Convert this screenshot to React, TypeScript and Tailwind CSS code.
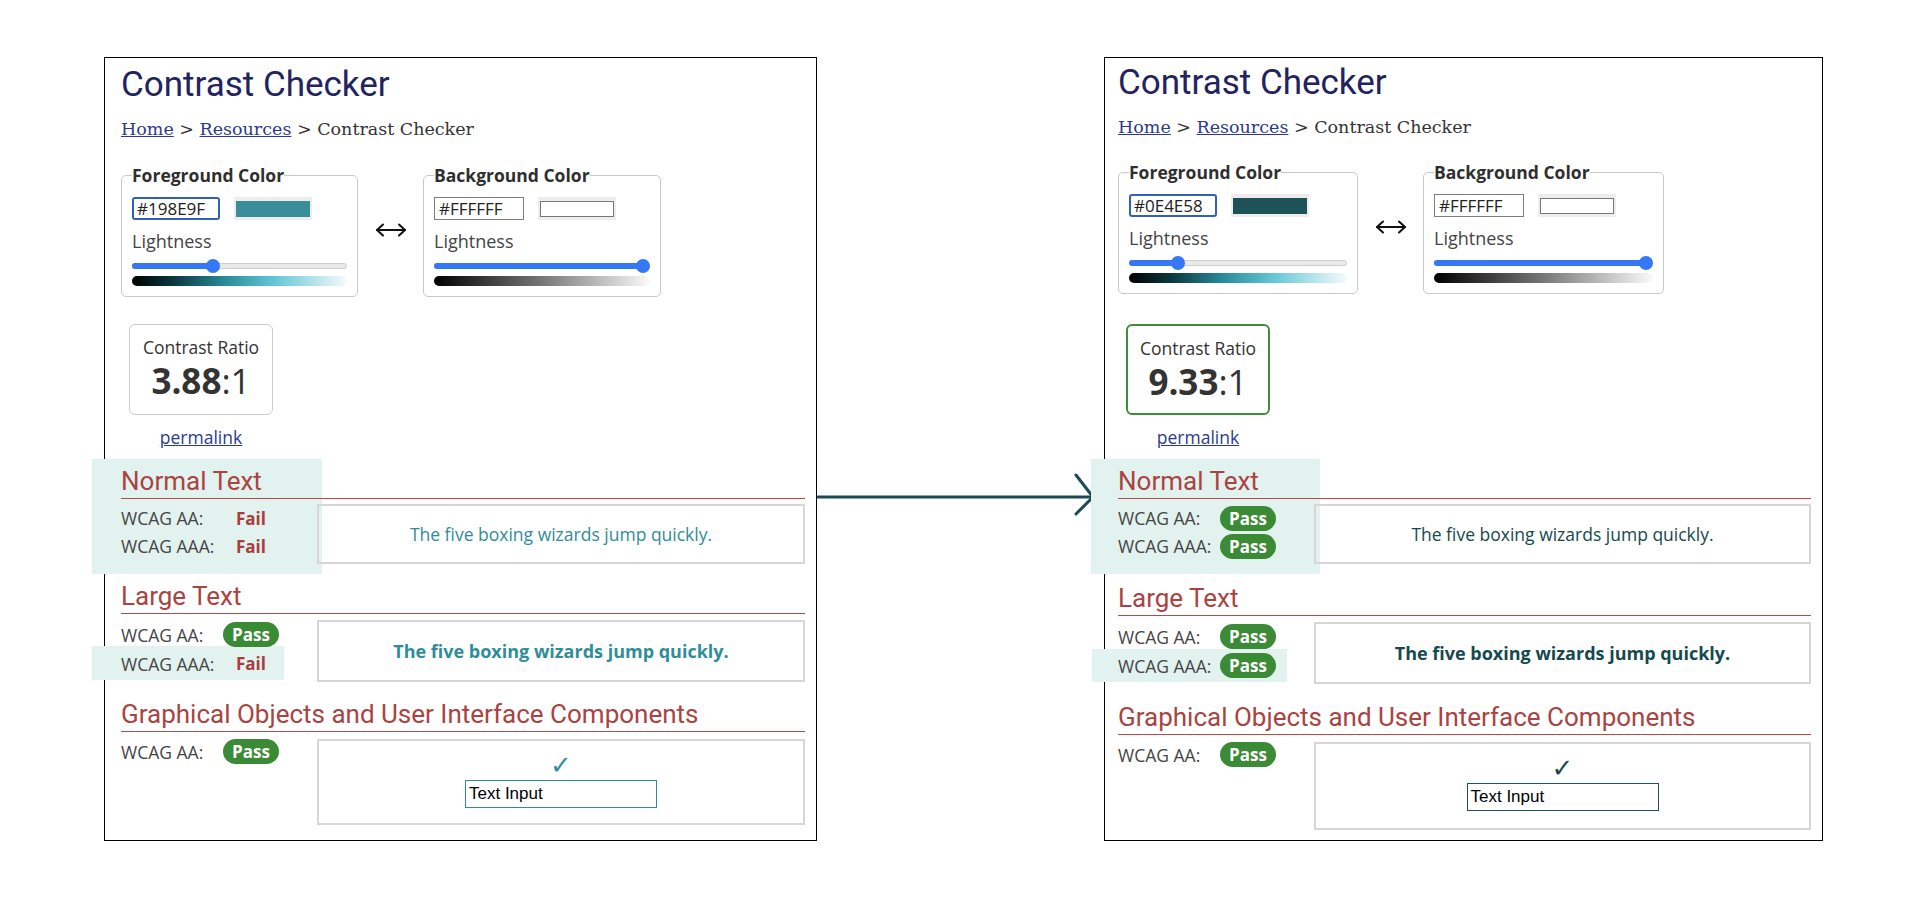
import React from 'react';

type Status = 'pass' | 'fail';

function Badge({ status }: { status: Status }) {
  if (status === 'pass') {
    return (
      <span className="flex h-[25px] w-[56px] items-center justify-center rounded-full bg-[#3b8a35] text-[17px] font-bold leading-none text-white">
        Pass
      </span>
    );
  }
  return (
    <span className="flex h-[25px] w-[56px] items-center justify-center text-[17px] font-bold leading-none text-[#a93c3c]">
      Fail
    </span>
  );
}

function Row({ label, status, h }: { label: string; status: Status; h: string }) {
  return (
    <div className={`flex items-center ${h}`}>
      <span className="w-[102px] shrink-0 text-[17.5px] leading-[24px] text-[#454545]">{label}</span>
      <Badge status={status} />
    </div>
  );
}

function Slider({ f }: { f: number }) {
  return (
    <div className="relative mt-[6px] flex h-[14px] items-center">
      <div className="h-[6px] w-full rounded-full border border-[#cfcfcf] bg-[#e9e9e9]" />
      <div
        className="absolute left-0 h-[6px] rounded-full bg-[#3478f6]"
        style={{ width: `calc((100% - 14px) * ${f} + 7px)` }}
      />
      <div
        className="absolute top-0 h-[14px] w-[14px] rounded-full bg-[#3478f6]"
        style={{ left: `calc((100% - 14px) * ${f})` }}
      />
    </div>
  );
}

function ColorField({
  title,
  hex,
  focused,
  swatch,
  f,
  gradient,
  width,
}: {
  title: string;
  hex: string;
  focused: boolean;
  swatch: string;
  f: number;
  gradient: string;
  width: string;
}) {
  return (
    <fieldset className={`${width} rounded-[5px] border border-[#c9c9c9] px-[10px] pt-[10px] pb-[10px]`}>
      <legend className="px-0 text-[17.5px] font-bold leading-[24px] text-[#2f2f2f]">{title}</legend>
      <div className="flex items-center gap-[14px]">
        {focused ? (
          <div className="h-[23px] w-[88px] rounded-[3px] border-2 border-[#2f62b6] px-[3px] text-[17px] leading-[19px] text-[#222]">
            {hex}
          </div>
        ) : (
          <div className="h-[23px] w-[90px] border border-[#7d7d7d] px-[4px] text-[17px] leading-[21px] text-[#222]">
            {hex}
          </div>
        )}
        <div className="flex h-[23px] w-[78px] items-center justify-center bg-[#ededed]">
          <div className={`h-[16px] w-[74px] ${swatch}`} />
        </div>
      </div>
      <div className="mt-[9px] text-[18px] leading-[24px] text-[#444]">Lightness</div>
      <Slider f={f} />
      <div className={`mt-[3px] h-[10px] rounded-full ${gradient}`} />
    </fieldset>
  );
}

function Section({
  title,
  className,
  hl,
  children,
}: {
  title: string;
  className: string;
  hl?: string;
  children: React.ReactNode;
}) {
  return (
    <section className={`relative ${className}`}>
      {hl && <div className={`absolute bg-[#e2f2ee] ${hl}`} />}
      <div className="relative">
        <h2 className="border-b border-[#b94a48] pb-[3px] font-['Roboto',sans-serif] text-[26px] leading-[28px] text-[#a94442]">
          {title}
        </h2>
        {children}
      </div>
    </section>
  );
}

type PanelProps = {
  panelClass: string;
  titleTop: string;
  pickersTop: string;
  ratioTop: string;
  largeTop: string;
  uiTop: string;
  uiBox: string;
  hex: string;
  fgText: string;
  fgSwatch: string;
  fgBorder: string;
  fgF: number;
  fgWidth: string;
  bgWidth: string;
  ratio: string;
  ratioBorder: string;
  normal: [Status, Status];
  large: [Status, Status];
  ui: Status;
  normalHl: string;
  largeHl: string;
};

function Panel(p: PanelProps) {
  return (
    <div
      className={`h-[784px] shrink-0 border border-black bg-white pr-[11px] font-['Open_Sans',sans-serif] text-[#444] ${p.panelClass}`}
    >
      <h1 className={`font-['Roboto',sans-serif] text-[35px] leading-[42px] text-[#22235f] ${p.titleTop}`}>
        Contrast Checker
      </h1>
      <div className="mt-[11px] font-['DejaVu_Serif',serif] text-[17.5px] leading-[24px] text-[#333]">
        <a className="text-[#2d3a8c] underline">Home</a> &gt; <a className="text-[#2d3a8c] underline">Resources</a>{' '}
        &gt; Contrast Checker
      </div>

      {/* color pickers */}
      <div className={`flex items-center ${p.pickersTop}`}>
        <ColorField
          title="Foreground Color"
          hex={p.hex}
          focused
          swatch={p.fgSwatch}
          f={p.fgF}
          width={p.fgWidth}
          gradient="bg-[linear-gradient(to_right,#000_0%,#0b3a42_20%,#2a8e9c_44%,#62c6d6_66%,#f5fbfc_100%)]"
        />
        <div className="flex w-[65px] shrink-0 justify-center">
          <svg width="32" height="14" viewBox="0 0 32 14" fill="none" stroke="#111" strokeWidth="2" strokeLinecap="round" strokeLinejoin="round">
            <path d="M2 7H30" />
            <path d="M8 1.5L2 7L8 12.5" />
            <path d="M24 1.5L30 7L24 12.5" />
          </svg>
        </div>
        <ColorField
          title="Background Color"
          hex="#FFFFFF"
          focused={false}
          swatch="bg-white border border-[#777]"
          f={1}
          width={p.bgWidth}
          gradient="bg-[linear-gradient(to_right,#000_0%,#777_50%,#fafafa_100%)]"
        />
      </div>

      {/* ratio */}
      <div className={`ml-[8px] flex w-[144px] flex-col items-center ${p.ratioTop}`}>
        <div className={`flex h-[91px] w-[144px] flex-col items-center rounded-[6px] pt-[10px] ${p.ratioBorder}`}>
          <div className="text-[17.5px] leading-[24px] text-[#333]">Contrast Ratio</div>
          <div className="mt-[2px] text-[35px] leading-[40px] text-[#333]">
            <span className="font-bold">{p.ratio}</span>:1
          </div>
        </div>
        <a className="mt-[10px] text-[17.5px] leading-[24px] text-[#2a3b8f] underline">permalink</a>
      </div>

      <Section title="Normal Text" className="mt-[18px]" hl={p.normalHl}>
        <div className="mt-[5px] flex">
          <div className="w-[196px] shrink-0">
            <Row label="WCAG AA:" status={p.normal[0]} h="h-[28px]" />
            <Row label="WCAG AAA:" status={p.normal[1]} h="h-[28px]" />
          </div>
          <div className={`flex h-[60px] flex-1 items-center justify-center border-2 border-[#d6d6d6] text-[17.5px] ${p.fgText}`}>
            The five boxing wizards jump quickly.
          </div>
        </div>
      </Section>

      <Section title="Large Text" className={p.largeTop} hl={p.largeHl}>
        <div className="mt-[6px] flex">
          <div className="w-[196px] shrink-0">
            <Row label="WCAG AA:" status={p.large[0]} h="h-[29px]" />
            <Row label="WCAG AAA:" status={p.large[1]} h="h-[29px]" />
          </div>
          <div
            className={`flex h-[62px] flex-1 items-center justify-center border-2 border-[#d6d6d6] text-[18px] font-bold ${p.fgText}`}
          >
            The five boxing wizards jump quickly.
          </div>
        </div>
      </Section>

      <Section title="Graphical Objects and User Interface Components" className={p.uiTop}>
        <div className="mt-[7px] flex">
          <div className="w-[196px] shrink-0">
            <Row label="WCAG AA:" status={p.ui} h="h-[25px]" />
          </div>
          <div className={`flex flex-1 flex-col items-center border-2 border-[#d6d6d6] pt-[9px] ${p.uiBox}`}>
            <div className={`font-['DejaVu_Sans',sans-serif] text-[26px] leading-[30px] ${p.fgText}`}>✓</div>
            <div
              className={`h-[28px] w-[192px] border pl-[3px] font-['Liberation_Sans',Arial,sans-serif] text-[17px] leading-[26px] text-black ${p.fgBorder}`}
            >
              Text Input
            </div>
          </div>
        </div>
      </Section>
    </div>
  );
}

export default function App() {
  return (
    <div className="flex min-h-[900px] w-[1920px] bg-white pl-[104px] pt-[57px]">
      <Panel
        panelClass="w-[713px] pl-[16px]"
        titleTop="pt-[6px]"
        pickersTop="mt-[22px]"
        ratioTop="mt-[27px]"
        largeTop="mt-[18px]"
        uiTop="mt-[18px]"
        uiBox="h-[86px]"
        hex="#198E9F"
        fgText="text-[#2f8d9a]"
        fgSwatch="bg-[#3a8e9a]"
        fgBorder="border-[#2f8d9a]"
        fgF={0.367}
        fgWidth="w-[237px]"
        bgWidth="w-[238px]"
        ratio="3.88"
        ratioBorder="border-[1.5px] border-[#cccccc]"
        normal={['fail', 'fail']}
        large={['pass', 'fail']}
        ui="pass"
        normalHl="-left-[29px] -top-[8px] h-[115px] w-[230px]"
        largeHl="-left-[29px] top-[64px] h-[34px] w-[192px]"
      />
      <div className="w-[287px] shrink-0">
        <svg className="mt-[410px]" width="287" height="60" viewBox="0 0 287 60" fill="none" stroke="#1c4c53" strokeWidth="3" strokeLinecap="round" strokeLinejoin="round">
          <path d="M1 30H276" />
          <path d="M259 8L276 30L259 47" />
        </svg>
      </div>
      <Panel
        panelClass="w-[719px] pl-[13px]"
        titleTop="pt-[4px]"
        pickersTop="mt-[21px]"
        ratioTop="mt-[30px]"
        largeTop="mt-[20px]"
        uiTop="mt-[19px]"
        uiBox="h-[88px]"
        hex="#0E4E58"
        fgText="text-[#16494f]"
        fgSwatch="bg-[#1f5258]"
        fgBorder="border-[#1f5258]"
        fgF={0.206}
        fgWidth="w-[240px]"
        bgWidth="w-[241px]"
        ratio="9.33"
        ratioBorder="border-2 border-[#3f8c3c]"
        normal={['pass', 'pass']}
        large={['pass', 'pass']}
        ui="pass"
        normalHl="-left-[27px] -top-[8px] h-[115px] w-[229px]"
        largeHl="-left-[26px] top-[65px] h-[33px] w-[195px]"
      />
    </div>
  );
}
